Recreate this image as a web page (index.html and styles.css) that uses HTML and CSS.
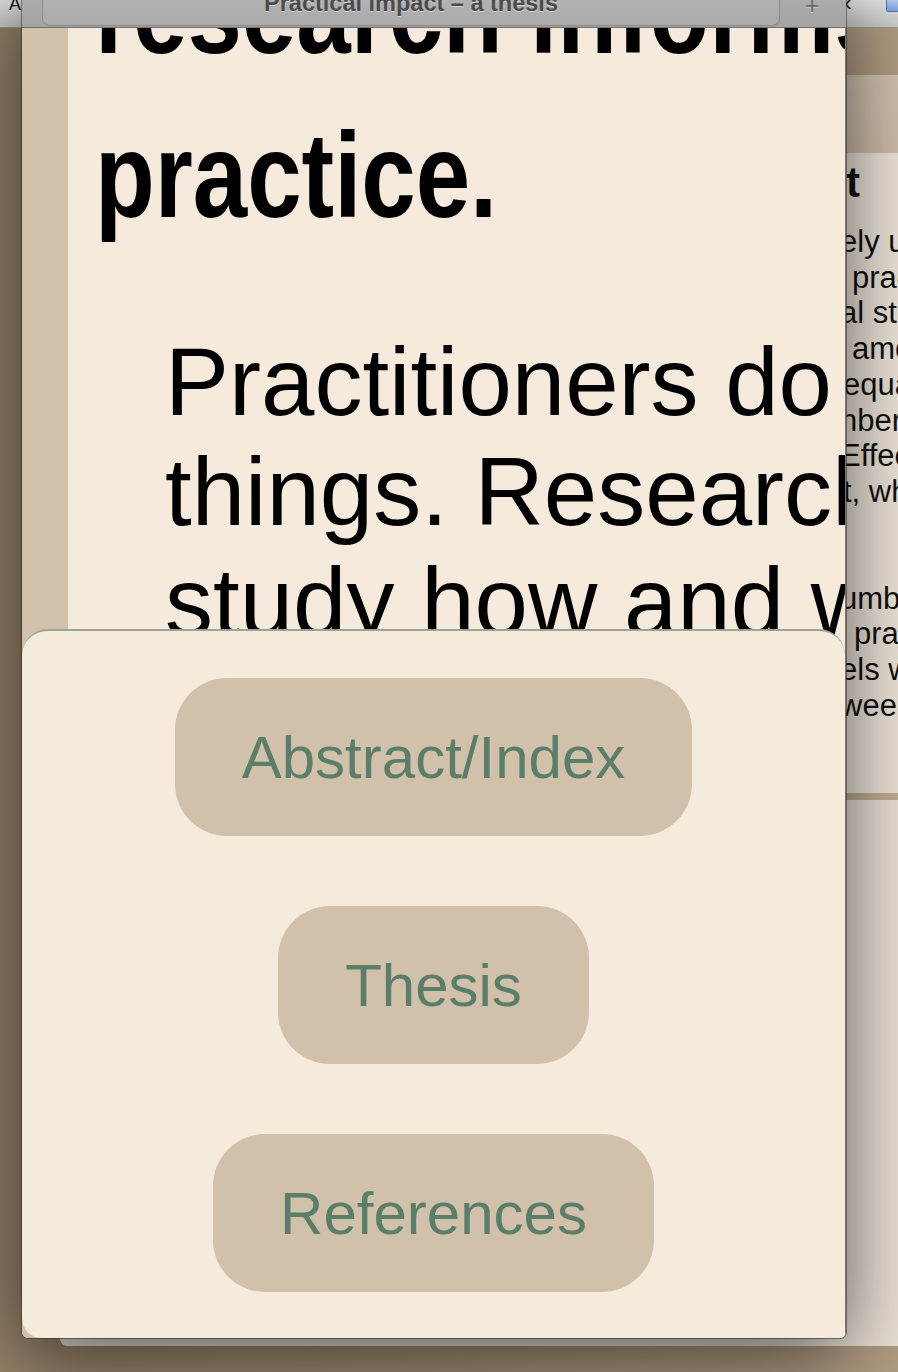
FILE: index.html
```html
<!DOCTYPE html>
<html lang="en">
<head>
<meta charset="utf-8">
<title>Practical impact – a thesis</title>
<link rel="stylesheet" href="styles.css">
</head>
<body>
<div class="desktop">
  <div class="menubar">
    <span class="mb-left">A</span>
    <span class="mb-right">
      <span class="mb-back">‹</span>
      <span class="mb-icon"></span>
    </span>
  </div>

  <div class="back-window">
    <div class="bw-toolbar"></div>
    <div class="bw-page">
      <h2 class="bw-h">t</h2>
      <p class="bw-p">
        <span class="ln">ely used</span>
        <span class="ln sp">practice</span>
        <span class="ln">al studies</span>
        <span class="ln sp">among</span>
        <span class="ln nudge">equally</span>
        <span class="ln">nbers</span>
        <span class="ln">Effect</span>
        <span class="ln nudge">t, which</span>
      </p>
      <p class="bw-p">
        <span class="ln">umbers</span>
        <span class="ln sp2">practice</span>
        <span class="ln">els who</span>
        <span class="ln">ween</span>
      </p>
    </div>
    <div class="bw-rule"></div>
    <div class="bw-page2"></div>
  </div>

  <div class="front-window">
    <div class="titlebar">
      <div class="tab">Practical impact – a thesis</div>
      <span class="newtab">+</span>
    </div>
    <div class="body">
      <div class="strip"></div>
      <div class="page">
        <h1 class="headline">research informs practice.</h1>
        <p class="lead">Practitioners do useful things. Researchers study how and why they do them.</p>
      </div>
      <nav class="menu">
        <a class="btn" href="#abstract">Abstract/Index</a>
        <a class="btn" href="#thesis">Thesis</a>
        <a class="btn" href="#references">References</a>
      </nav>
    </div>
  </div>
</div>
</body>
</html>
```

FILE: styles.css
```css
* { box-sizing: border-box; }
html, body { margin: 0; padding: 0; }
body {
  width: 898px;
  height: 1372px;
  overflow: hidden;
  font-family: "Liberation Sans", Arial, sans-serif;
}

.desktop {
  position: relative;
  width: 898px;
  height: 1372px;
  overflow: hidden;
  background: linear-gradient(90deg, #968268 0%, #a08c72 50%, #b09c82 100%);
}

/* menu bar behind everything */
.menubar {
  position: absolute;
  left: 0;
  top: 0;
  width: 898px;
  height: 28px;
  display: flex;
  align-items: flex-start;
  background: linear-gradient(#e6e6e6, #cacaca);
  border-bottom: 1px solid #9a9a9a;
  overflow: hidden;
}
.mb-left {
  margin: -5px 0 0 9px;
  font-size: 18px;
  line-height: 18px;
  color: #111;
}
.mb-right {
  margin-left: auto;
  margin-right: -16px;
  display: flex;
  align-items: flex-start;
  gap: 34px;
}
.mb-back {
  margin-top: -8px;
  font-size: 24px;
  line-height: 22px;
  color: #222;
}
.mb-icon {
  width: 28px;
  height: 12px;
  border: 1px solid #4f78b5;
  border-top: none;
  border-radius: 0 0 2px 2px;
  background: linear-gradient(#b6cdee, #7fa4dc);
}

/* window behind, on the right */
.back-window {
  position: absolute;
  left: 60px;
  top: 75px;
  width: 880px;
  height: 1271px;
  display: flex;
  flex-direction: column;
  border-radius: 6px 6px 8px 8px;
  overflow: hidden;
  background: #ebe3d7;
}
.bw-toolbar {
  height: 78px;
  flex: none;
  background: linear-gradient(#d2c3b0, #ccbca7);
}
.bw-page {
  height: 640px;
  flex: none;
  background: #ece4d8;
  padding: 6px 0 0 780px;
  color: #111;
  white-space: nowrap;
}
.bw-h {
  margin: 0 0 0 6px;
  font: bold 42px/48px "Liberation Sans", Arial, sans-serif;
}
.bw-p {
  margin: 17px 0 0;
  font-size: 31px;
  line-height: 35.7px;
}
.bw-p + .bw-p { margin-top: 71px; }
.ln { display: block; }
.ln.sp { padding-left: 12px; }
.ln.sp2 { padding-left: 14px; }
.ln.nudge { padding-left: 3px; }
.bw-rule {
  height: 7px;
  flex: none;
  background: #bfae95;
}
.bw-page2 {
  flex: 1;
  background: #e9e1d5;
}

/* front window */
.front-window {
  position: absolute;
  left: 22px;
  top: -18px;
  width: 824px;
  height: 1356px;
  display: flex;
  flex-direction: column;
  border-radius: 0 0 6px 6px;
  overflow: hidden;
  box-shadow: 0 18px 80px rgba(0, 0, 0, 0.62), 0 0 0 1px rgba(70, 60, 50, 0.55);
}
.titlebar {
  height: 46px;
  flex: none;
  display: flex;
  align-items: flex-start;
  padding-left: 20px;
  background: linear-gradient(#b2b2b2, #a3a3a3);
  border-bottom: 1px solid #6f6f6f;
}
.tab {
  width: 738px;
  height: 44px;
  padding-top: 8px;
  text-align: center;
  font-weight: bold;
  font-size: 23.5px;
  line-height: 26px;
  color: #4b4b4b;
  text-shadow: 0 1px 0 rgba(255, 255, 255, 0.45);
  background: linear-gradient(#b6b6b6, #ababab);
  border: 1px solid #8a8a8a;
  border-top: none;
  border-radius: 0 0 8px 8px;
}
.newtab {
  width: 22px;
  margin-left: 21px;
  padding-top: 10px;
  text-align: center;
  font-size: 26px;
  line-height: 26px;
  color: #6c6c6c;
  text-shadow: 0 1px 0 rgba(255, 255, 255, 0.4);
}

.body {
  position: relative;
  flex: 1;
  display: flex;
  background: #d2c1ab;
  border-right: 1px solid #7d7872;
}
.strip {
  width: 46px;
  flex: none;
  background: #d2c1ab;
}
.page {
  flex: 1;
  overflow: hidden;
  background: #f5eadc;
  padding-left: 27px;
  color: #000;
}
.headline {
  width: 1100px;
  margin: -99px 0 0;
  font-weight: bold;
  font-size: 120px;
  line-height: 164px;
  transform: scaleX(0.815);
  transform-origin: left top;
}
.lead {
  width: 960px;
  margin: 70px 0 0 70px;
  font-size: 96px;
  line-height: 110px;
}

/* overlay menu panel */
.menu {
  position: absolute;
  left: 0;
  right: 0;
  bottom: 0;
  height: 709px;
  display: flex;
  flex-direction: column;
  align-items: center;
  gap: 70px;
  padding-top: 47px;
  background: #f5eadc;
  border-top: 2px solid #97a595;
  border-radius: 26px 26px 20px 20px;
}
.btn {
  display: flex;
  align-items: center;
  height: 158px;
  padding: 0 67px;
  border-radius: 52px;
  background: #d1c0aa;
  color: #5a7e6a;
  font-size: 60px;
  text-decoration: none;
}
```
